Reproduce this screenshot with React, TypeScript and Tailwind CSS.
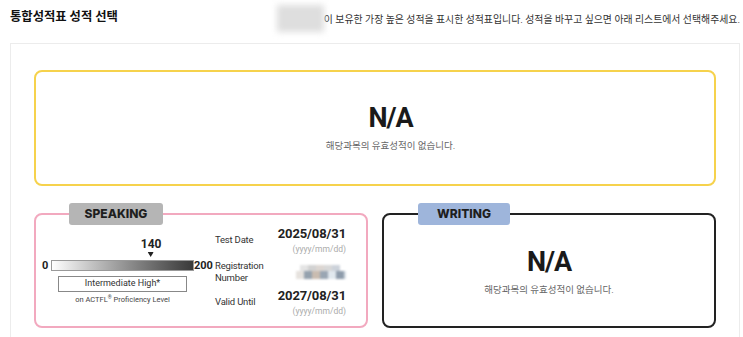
import React from "react";

const SCORE = 140;
const MAX = 200;

function Blur({ className }: { className: string }) {
  return <div className={className} />;
}

function Mosaic() {
  return (
    <div className="flex flex-col w-[50px] h-[14px] blur-[1px]">
      <div className="flex h-[6px] pl-[4px]">
        <div className="w-[8px] bg-[#e4e4e4]" />
        <div className="w-[8px] bg-[#d2d2d2]" />
        <div className="w-[8px] bg-[#dcd6d2]" />
        <div className="w-[8px] bg-[#d8d8d8]" />
        <div className="w-[8px] bg-[#ccd2da]" />
      </div>
      <div className="flex h-[8px]">
        <div className="w-[8px] bg-[#e6e2de]" />
        <div className="w-[8px] bg-[#95a2ae]" />
        <div className="w-[8px] bg-[#c9bcb0]" />
        <div className="w-[8px] bg-[#9aa6b3]" />
        <div className="w-[8px] bg-[#e1e8ee]" />
        <div className="w-[8px] bg-[#8e9cab]" />
        <div className="w-[2px] bg-[#d6dde4]" />
      </div>
    </div>
  );
}

function DateValue({ date }: { date: string }) {
  return (
    <div className="flex flex-col items-end">
      <div className="text-[13px] leading-[14px] font-bold text-[#222] tracking-[-0.1px]">{date}</div>
      <div className="mt-[3px] text-[8.5px] leading-[10px] text-[#aaa]">(yyyy/mm/dd)</div>
    </div>
  );
}

function NA() {
  return (
    <div className="flex flex-col items-center">
      <div className="text-[27px] leading-[28px] font-bold text-[#1a1a1a] tracking-[-1px]">N/A</div>
      <div className="mt-[8px] text-[9.5px] leading-[12px] text-[#666]">해당과목의 유효성적이 없습니다.</div>
    </div>
  );
}

export default function App() {
  const pct = (SCORE / MAX) * 100;
  return (
    <div className="w-[743px] h-[337px] overflow-hidden bg-white font-['Roboto','Noto_Sans_CJK_KR',sans-serif] text-[#333]">
      {/* header */}
      <div className="flex justify-between items-start h-[43px] pl-[10px] pr-[3px]">
        <div className="mt-[9px] text-[12.3px] leading-[16px] font-bold text-[#111]">통합성적표 성적 선택</div>
        <div className="mt-[5px] flex items-center">
          <Blur className="w-[47px] h-[27px] bg-[#dedede] blur-[3px]" />
          <div className="text-[9.9px] leading-[14px] text-[#333] mt-[2px]">
            이 보유한 가장 높은 성적을 표시한 성적표입니다. 성적을 바꾸고 싶으면 아래 리스트에서 선택해주세요.
          </div>
        </div>
      </div>

      {/* container */}
      <div className="ml-[10px] mr-[3px] border border-[#ececec] px-[23px] pt-[26px] h-[320px]">
        <div className="h-[116px] border-2 border-[#f6d24c] rounded-[8px] flex items-center justify-center pl-[31px]">
          <NA />
        </div>

        <div className="mt-[27px] grid grid-cols-2 gap-[14px]">
          {/* speaking */}
          <div className="relative h-[115px] border-2 border-[#f2a9bf] rounded-[8px]">
            <div className="absolute left-[33px] top-[-12px] w-[94px] h-[22px] rounded-[3px] bg-[#b5b5b5] flex items-center justify-center text-[12px] font-extrabold font-['Inter',sans-serif] text-[#1e1e1e]">
              SPEAKING
            </div>
            <div className="flex pl-[6px] pr-[20px]">
              <div className="w-[173px] flex flex-col mt-[23px]">
                <div className="ml-[9px] w-[143px] h-[22px] relative">
                  <div
                    className="absolute top-0 flex flex-col items-center -translate-x-1/2"
                    style={{ left: `${pct}%` }}
                  >
                    <div className="text-[12px] leading-[12px] font-bold text-[#222]">{SCORE}</div>
                    <svg width="6" height="5" viewBox="0 0 6 5" className="mt-[2px]">
                      <path d="M0 0H6L3 5Z" fill="#222" />
                    </svg>
                  </div>
                </div>
                <div className="flex items-center h-[11px]">
                  <div className="w-[9px] text-[11px] font-bold leading-[11px] text-[#222]">0</div>
                  <div className="w-[143px] h-[11px] border border-[#999] bg-gradient-to-r from-white to-[#3a3a3a]" />
                  <div className="text-[11px] font-bold leading-[11px] text-[#222]">{MAX}</div>
                </div>
                <div className="ml-[16px] mt-[5px] w-[129px] h-[16px] border border-[#888] flex items-center justify-center text-[9px] text-[#333]">
                  Intermediate High*
                </div>
                <div className="ml-[16px] w-[129px] mt-[3px] text-center text-[7.5px] leading-[10px] text-[#444]">
                  on ACTFL<span className="relative top-[-3px] text-[5px]">®</span> Proficiency Level
                </div>
              </div>

              <div className="flex-1 flex flex-col mt-[12px]">
                <div className="flex justify-between items-center h-[27px]">
                  <div className="text-[9.5px] text-[#333] tracking-[-0.2px]">Test Date</div>
                  <DateValue date="2025/08/31" />
                </div>
                <div className="flex justify-between items-center h-[24px] mt-[6px]">
                  <div className="text-[9.5px] leading-[12px] text-[#333] tracking-[-0.2px]">
                    Registration
                    <br />
                    Number
                  </div>
                  <Mosaic />
                </div>
                <div className="flex justify-between items-center h-[27px] mt-[5px]">
                  <div className="text-[9.5px] text-[#333] tracking-[-0.2px]">Valid Until</div>
                  <DateValue date="2027/08/31" />
                </div>
              </div>
            </div>
          </div>

          {/* writing */}
          <div className="relative h-[115px] border-2 border-[#222] rounded-[8px] flex items-center justify-center">
            <div className="absolute left-[34px] top-[-12px] w-[92px] h-[22px] rounded-[3px] bg-[#9eb5db] flex items-center justify-center text-[12px] font-extrabold font-['Inter',sans-serif] text-[#1e1e1e]">
              WRITING
            </div>
            <div className="mt-[2px]">
              <NA />
            </div>
          </div>
        </div>
      </div>
    </div>
  );
}
